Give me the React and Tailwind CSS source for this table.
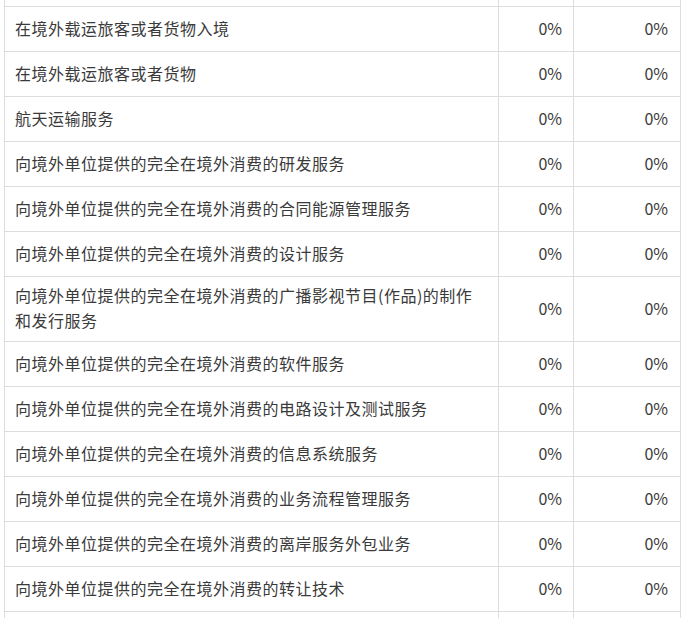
import React from "react";

const prefix = "向境外单位提供的完全在境外消费的";

// first and last entries are the rows cut off by the viewport edges
const rows = [
  null,
  "在境外载运旅客或者货物入境",
  "在境外载运旅客或者货物",
  "航天运输服务",
  prefix + "研发服务",
  prefix + "合同能源管理服务",
  prefix + "设计服务",
  prefix + "广播影视节目(作品)的制作和发行服务",
  prefix + "软件服务",
  prefix + "电路设计及测试服务",
  prefix + "信息系统服务",
  prefix + "业务流程管理服务",
  prefix + "离岸服务外包业务",
  prefix + "转让技术",
  null,
];

function Row({ name }) {
  const rate = name ? "0%" : "";
  return (
    <div className="grid grid-cols-[494px_75px_107px] border-b border-[#dddddd]">
      <div className="flex items-center min-h-[44px] border-r border-[#dddddd] pl-[10px] pr-[10px] pt-[6px] pb-[8px] leading-[25px] tracking-[0.5px]">
        {name}
      </div>
      <div className="flex items-center justify-end border-r border-[#dddddd] pr-[11px] pb-[2px]">
        {rate}
      </div>
      <div className="flex items-center justify-end border-r border-[#dddddd] pr-[12px] pb-[2px]">
        {rate}
      </div>
    </div>
  );
}

export default function App() {
  return (
    <div
      className="h-[618px] w-[687px] overflow-hidden bg-white text-[16px] text-[#3a3a3a]"
      style={{ fontFamily: '"Noto Sans CJK SC", "Noto Sans", sans-serif' }}
    >
      <div className="ml-[4px] mt-[-38px] w-[677px] border-l border-[#dddddd]">
        {rows.map((r, i) => (
          <Row key={i} name={r} />
        ))}
      </div>
    </div>
  );
}
